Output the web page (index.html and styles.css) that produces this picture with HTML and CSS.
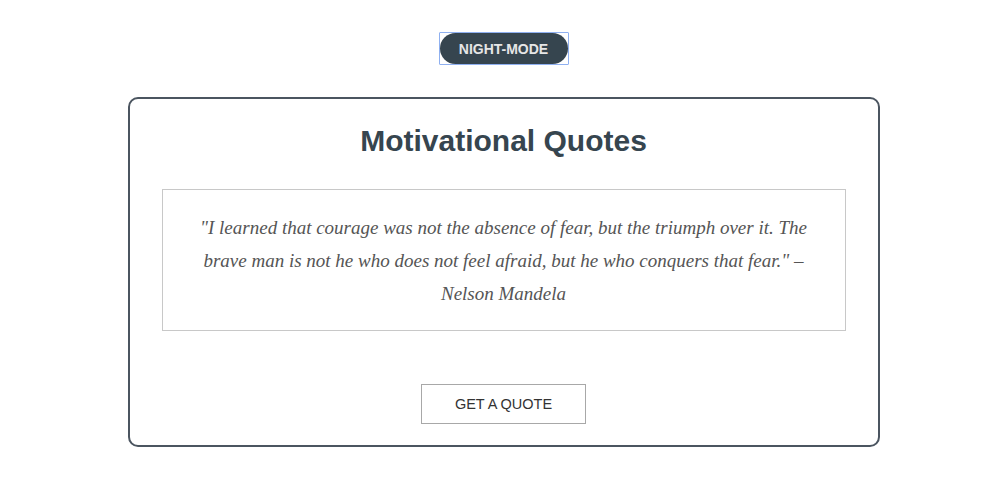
FILE: index.html
```html
<!DOCTYPE html>
<html>
<head>
<meta charset="utf-8">
<link rel="stylesheet" href="styles.css">
</head>
<body>
<div class="page">
  <div class="top">
    <span class="focus-ring"><button class="night">NIGHT-MODE</button></span>
  </div>
  <div class="card">
    <h1 class="title">Motivational Quotes</h1>
    <div class="quote-box">
      <p class="quote">"I learned that courage was not the absence of fear, but the triumph over it. The brave man is not he who does not feel afraid, but he who conquers that fear." – Nelson Mandela</p>
    </div>
    <div class="actions">
      <button class="get">GET A QUOTE</button>
    </div>
  </div>
</div>
</body>
</html>
```
FILE: styles.css
```css
html, body {
  margin: 0;
  padding: 0;
  background: #ffffff;
}
.page {
  padding: 32px 0 0 7px;
  font-family: "Liberation Sans", Arial, sans-serif;
}
.top {
  display: flex;
  justify-content: center;
}
.focus-ring {
  display: block;
  border: 1px solid #8fb0f0;
  border-radius: 1px;
}
.night {
  display: block;
  width: 128px;
  height: 31px;
  background: #36454f;
  color: #e6e6e6;
  border: none;
  border-radius: 16px;
  font-family: "Liberation Sans", Arial, sans-serif;
  font-size: 14px;
  font-weight: bold;
  padding: 0;
}
.card {
  margin: 32px auto 0;
  border: 2px solid #4b5560;
  border-radius: 10px;
  padding: 20px 32px 21px;
  box-sizing: content-box;
  width: 684px;
}
.title {
  margin: 0;
  text-align: center;
  font-size: 30px;
  font-weight: bold;
  color: #36454f;
  line-height: 44px;
}
.quote-box {
  margin-top: 26px;
  border: 1px solid #c8c8c8;
  padding: 21px 26px 20px;
}
.quote {
  margin: 0;
  text-align: center;
  font-family: "Liberation Serif", "Times New Roman", serif;
  font-style: italic;
  font-size: 19px;
  line-height: 33px;
  color: #555555;
}
.actions {
  display: flex;
  justify-content: center;
  margin-top: 53px;
}
.get {
  width: 165px;
  height: 40px;
  background: #ffffff;
  border: 1px solid #a8a8a8;
  font-family: "Liberation Sans", Arial, sans-serif;
  font-size: 14.5px;
  color: #333333;
  padding: 0;
}
```
